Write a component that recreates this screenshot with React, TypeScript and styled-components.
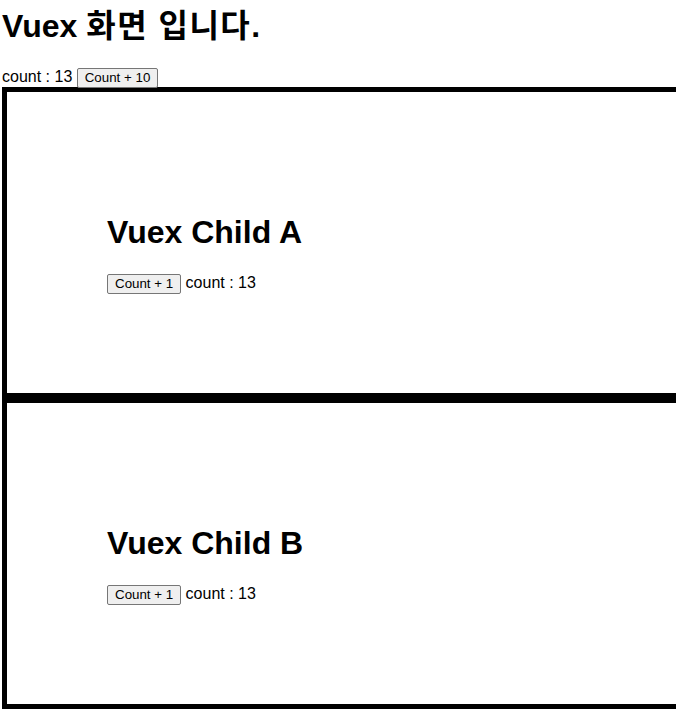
import { useState } from 'react';
import styled, { createGlobalStyle } from 'styled-components';

const GlobalStyle = createGlobalStyle`
  html, body {
    margin: 0;
    overflow: hidden;
    background: #fff;
  }
  body {
    font-family: 'Liberation Sans', 'Noto Sans CJK KR', sans-serif;
    font-size: 16px;
    color: #000;
  }
`;

const Page = styled.div`
  padding-left: 2px;
`;

const Title = styled.h1`
  margin: 8px 0 21.44px;
  font-size: 32px;
  line-height: 37px;
  font-weight: bold;
`;

const Hangul = styled.span`
  letter-spacing: 1.5px;
`;

const CountLine = styled.div`
  height: 21px;
  line-height: 21px;
`;

const Button = styled.button`
  box-sizing: border-box;
  height: 20px;
  font-family: 'Liberation Sans', sans-serif;
  font-size: 13.33px;
  padding: 0 7px;
  border: 1px solid #767676;
  border-radius: 2px;
  background: #efefef;
  color: #000;
  cursor: pointer;

  &:hover {
    background: #e5e5e5;
  }
`;

const ChildBox = styled.div`
  width: 100%;
  padding: 100px;
  border: 5px solid #000;
`;

const ChildTitle = styled.h1`
  margin: 21.44px 0;
  font-size: 32px;
  line-height: 37px;
  font-weight: bold;
`;

type ChildProps = {
  name: string;
  count: number;
  onAdd: () => void;
};

const Child = ({ name, count, onAdd }: ChildProps) => (
  <ChildBox>
    <ChildTitle>Vuex Child {name}</ChildTitle>
    <CountLine>
      <Button onClick={onAdd}>Count + 1</Button> count : {count}
    </CountLine>
  </ChildBox>
);

const App = () => {
  const [count, setCount] = useState(13);

  return (
    <Page>
      <GlobalStyle />
      <Title>
        Vuex <Hangul>화면 입니다</Hangul>.
      </Title>
      <CountLine>
        count : {count} <Button onClick={() => setCount(count + 10)}>Count + 10</Button>
      </CountLine>
      <Child name='A' count={count} onAdd={() => setCount(count + 1)} />
      <Child name='B' count={count} onAdd={() => setCount(count + 1)} />
    </Page>
  );
};

export default App;
